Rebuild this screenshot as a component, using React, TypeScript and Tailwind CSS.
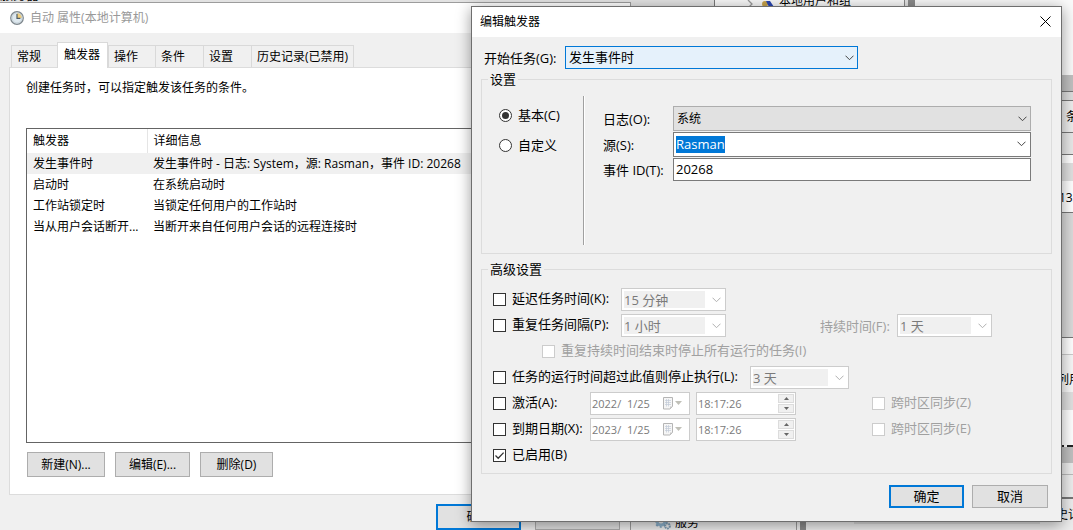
import type { ReactNode } from "react";

const triggers = [
  { name: "发生事件时", detail: "发生事件时 - 日志: System，源: Rasman，事件 ID: 20268" },
  { name: "启动时", detail: "在系统启动时" },
  { name: "工作站锁定时", detail: "当锁定任何用户的工作站时" },
  { name: "当从用户会话断开...", detail: "当断开来自任何用户会话的远程连接时" },
];

const tabs = [
  { label: "常规", width: "w-[46px]" },
  { label: "触发器", width: "w-[51px]", active: true },
  { label: "操作", width: "w-[47px]" },
  { label: "条件", width: "w-12" },
  { label: "设置", width: "w-12" },
  { label: "历史记录(已禁用)", width: "w-[103px]" },
];

function Chevron({ className = "text-[#444]" }: { className?: string }) {
  return (
    <svg aria-hidden="true" viewBox="0 0 9 6" className={`pointer-events-none h-[6px] w-[9px] ${className}`}>
      <path d="M0.5 0.7 4.5 4.7 8.5 0.7" fill="none" stroke="currentColor" strokeWidth="1" />
    </svg>
  );
}

function ClockIcon() {
  return (
    <svg aria-hidden="true" viewBox="0 0 14 14" className="h-[14px] w-[14px]">
      <circle cx="7" cy="7" r="6.3" fill="#dfe9ef" stroke="#7d868c" strokeWidth="1.2" />
      <path d="M7 7V2a5 5 0 0 1 5 5z" fill="#f3cf7a" />
      <circle cx="7" cy="7" r="4.9" fill="none" stroke="#b9c6ce" strokeWidth="0.6" />
      <path d="M7 3v4.3h3.4" fill="none" stroke="#4f5d68" strokeWidth="1.2" />
    </svg>
  );
}

function GearIcon() {
  return (
    <svg aria-hidden="true" viewBox="0 0 16 16" className="h-4 w-4">
      <circle cx="6" cy="7" r="4" fill="none" stroke="#8fb4cf" strokeWidth="3" />
      <circle cx="6" cy="7" r="6" fill="none" stroke="#7ea4c0" strokeWidth="1.6" strokeDasharray="2 2.2" />
      <circle cx="12.5" cy="12" r="2.4" fill="none" stroke="#7d9db5" strokeWidth="2" strokeDasharray="1.6 0.6" />
    </svg>
  );
}

// tick box with its label, shared by every option in the dialog
function Check({
  id,
  children,
  width = "",
  disabled,
  checked,
}: {
  id: string;
  children: ReactNode;
  width?: string;
  disabled?: boolean;
  checked?: boolean;
}) {
  return (
    <div className={`flex shrink-0 items-center gap-[6px] pb-px ${width}`}>
      <span className="relative flex h-[13px] w-[13px]">
        <input
          id={id}
          type="checkbox"
          disabled={disabled}
          defaultChecked={checked}
          className="peer h-[13px] w-[13px] appearance-none border border-[#333] bg-white disabled:border-[#ccc]"
        />
        <svg
          aria-hidden="true"
          viewBox="0 0 13 13"
          className="pointer-events-none absolute inset-0 hidden peer-checked:block"
        >
          <path d="M2.5 6.5 5.2 9.2 10.6 3.6" fill="none" stroke="#333" strokeWidth="1.3" />
        </svg>
      </span>
      <label htmlFor={id} className={`whitespace-nowrap pb-[3px] ${disabled ? "text-[#a0a0a0]" : ""}`}>
        {children}
      </label>
    </div>
  );
}

function DisabledCombo({ label, value, width }: { label: string; value: string; width: string }) {
  return (
    <div className={`flex h-[23px] shrink-0 items-center border border-[#ccc] bg-white p-[2px] ${width}`}>
      <select
        disabled
        aria-label={label}
        className="h-[17px] min-w-0 flex-1 appearance-none bg-[#f0f0f0] leading-4 text-[#7a7a7a] opacity-100"
      >
        <option>{value}</option>
      </select>
      <span className="flex w-[18px] justify-end pr-[2px]">
        <Chevron className="text-[#b0b0b0]" />
      </span>
    </div>
  );
}

function DateBox({ label, value }: { label: string; value: string }) {
  return (
    <div className="flex h-[23px] w-[100px] shrink-0 items-center border border-[#ccc] bg-white pl-px">
      <input
        disabled
        aria-label={label}
        defaultValue={value}
        className="w-[70px] whitespace-pre text-[11px] text-[#7a7a7a]"
      />
      <svg aria-hidden="true" viewBox="0 0 20 13" className="h-[13px] w-5">
        <path d="M1.5 0.5h9v9l-2.500 2.500h-6.500z" fill="#f6f6f6" stroke="#b5b5b5" />
        <path d="M3 3.500h6M3 5.500h6M3 7.500h6M4.500 2v7.500M6.500 2v7.500" stroke="#c3ccd8" strokeWidth="0.7" />
        <path d="M10.500 9.500 8 12V9.500z" fill="#c8c8c8" />
        <path d="M13 4h7l-3.500 4z" fill="#c0c0b8" />
      </svg>
    </div>
  );
}

function TimeBox({ label, value }: { label: string; value: string }) {
  return (
    <div className="ml-[6px] flex h-[23px] w-[100px] shrink-0 items-center justify-between border border-[#ccc] bg-white px-[1px]">
      <input disabled aria-label={label} defaultValue={value} className="w-[60px] text-[11px] text-[#7a7a7a]" />
      <span className="flex flex-col gap-px">
        {["增加", "减少"].map((dir) => (
          <button
            key={dir}
            type="button"
            disabled
            aria-label={dir}
            className="flex h-[9px] w-4 items-center justify-center border border-[#dcdcdc] bg-[#f0f0f0]"
          >
            <svg aria-hidden="true" viewBox="0 0 5 3" className="h-[3px] w-[5px]">
              <path d={dir === "增加" ? "M0 3h5L2.500 0z" : "M0 0h5L2.500 3z"} fill="#666" />
            </svg>
          </button>
        ))}
      </span>
    </div>
  );
}

// what shows of the consoles behind the two open windows
function Backdrop() {
  return (
    <div aria-hidden="true" className="absolute inset-0 flex overflow-hidden bg-[#ededed] text-[12px] leading-4">
      <div className="flex min-w-0 flex-1 flex-col justify-between">
        <div className="flex h-2 items-end overflow-hidden bg-[#e2e2e2]">
          <div className="h-full w-[715px] border-r border-[#777]">
            <div className="flex h-[2px] w-[42px] items-end overflow-hidden">
              <span className="text-[13px]">服务器</span>
            </div>
          </div>
          <div className="flex h-full w-[190px] items-end gap-1 border-r border-[#888] bg-[#f7f7f7] pl-8">
            <svg viewBox="0 0 28 8" className="h-2 w-7">
              <path d="M1 0 5 4 1 8" fill="none" stroke="#999" strokeWidth="1.3" />
              <circle cx="18" cy="4" r="3" fill="#c6a24a" />
              <path d="M19 1h4l4 6h-5z" fill="#2946b0" />
            </svg>
            <span className="leading-[14px]">本地用户和组</span>
          </div>
          <div className="ml-[3px] h-full w-[7px] bg-[#8a8a8a]" />
          <div className="h-full flex-1 bg-[#f7f7f7]" />
        </div>
        <div className="flex h-[9px] overflow-hidden">
          <div className="w-[655px]" />
          <div className="flex h-full w-[142px] items-end gap-1 border-r border-[#999]">
            <GearIcon />
            <span className="leading-[14px]">服务</span>
          </div>
          <div className="ml-[3px] w-[6px] bg-[#8a8a8a]" />
          <div className="ml-12 h-[3px] flex-1 bg-[#d8d8d8]" />
        </div>
      </div>
      <div className="flex w-[33px] flex-col overflow-hidden whitespace-nowrap">
        <div className="h-[75px] bg-[#fafafa]" />
        <div className="h-4 bg-[#c0c0c0]" />
        <div className="h-[10px] border-y border-[#777] bg-[#ddd]" />
        <div className="flex h-8 items-center border-b border-[#777] pl-[26px]">
          <span>条件</span>
        </div>
        <div className="h-[22px] border-b border-[#777] bg-[#e8e8e8]" />
        <div className="h-2 bg-white" />
        <div className="h-[18px] bg-[#e0e0e0]" />
        <div className="h-8 border-b border-[#777] bg-white pt-[9px] pl-[19px]">133</div>
        <div className="h-[124px] bg-[#dadada]" />
        <div className="h-[18px] border-t border-b border-t-[#777] border-b-[#ccc] bg-white" />
        <div className="flex h-[37px] items-center bg-[#f7f7f7] pt-3 pl-[17px]">
          <span>列用</span>
        </div>
        <div className="h-[18px] bg-[#e0e0e0]" />
        <div className="h-[37px] border-b-2 border-dashed border-[#222] bg-white" />
        <div className="h-4 bg-[#c0c0c0]" />
        <div className="h-3 border-b border-[#bbb]" />
        <div className="h-6 border-b-2 border-[#777]" />
        <div className="flex flex-1 items-center pl-[16px]">
          <span>史记录</span>
        </div>
      </div>
    </div>
  );
}

function PropertiesWindow() {
  return (
    <section
      aria-label="自动 属性(本地计算机)"
      className="absolute top-[2px] left-0 w-[631px] border-t border-r border-[#9c9c9c] bg-[#f0f0f0] text-[12px] leading-4"
    >
      <header className="flex h-[30px] items-center gap-[6px] bg-white pl-[10px] text-[#999]">
        <ClockIcon />
        <h1>自动 属性(本地计算机)</h1>
      </header>

      <div className="pt-[9px] pr-[10px] pl-[9px]">
        <div role="tablist" className="flex items-end pl-[2px]">
          {tabs.map((tab) => (
            <button
              key={tab.label}
              type="button"
              role="tab"
              aria-selected={!!tab.active}
              className={`shrink-0 whitespace-nowrap border-t border-l border-[#d9d9d9] text-left last:border-r ${tab.width} ${
                tab.active ? "z-10 -mb-px h-[26px] border-r bg-white pb-[2px] pl-[6px]" : "h-[22px] pl-[5px]"
              }`}
            >
              {tab.label}
            </button>
          ))}
        </div>
        <div className="border border-[#dcdcdc] bg-white px-4 pt-3 pb-[17px]">
          <p>创建任务时，可以指定触发该任务的条件。</p>
          <div className="mt-8 h-[315px] overflow-hidden border border-[#646464]">
            <table className="w-full table-fixed text-left">
              <thead>
                <tr className="h-6">
                  <th className="w-[120px] border-r border-[#e5e5e5] pl-[6px] font-normal">触发器</th>
                  <th className="pl-[6px] font-normal">详细信息</th>
                </tr>
              </thead>
              <tbody>
                {triggers.map((t, i) => (
                  <tr key={t.name} className={`h-[21px] ${i === 0 ? "bg-[#f0f0f0]" : ""}`}>
                    <td className="whitespace-nowrap pl-[6px]">{t.name}</td>
                    <td className="whitespace-nowrap pl-[6px]">{t.detail}</td>
                  </tr>
                ))}
              </tbody>
            </table>
          </div>
          <div className="mt-[9px] flex gap-[10px] pl-px">
            <button type="button" className="h-[25px] w-[78px] border border-[#adadad] bg-[#e1e1e1]">
              新建(N)...
            </button>
            <button type="button" className="h-[25px] w-[75px] border border-[#adadad] bg-[#e1e1e1]">
              编辑(E)...
            </button>
            <button type="button" className="h-[25px] w-[73px] border border-[#adadad] bg-[#e1e1e1]">
              删除(D)
            </button>
          </div>
        </div>
      </div>

      <div className="flex justify-end gap-[14px] pt-[9px] pr-[10px]">
        <button type="button" className="h-[26px] w-[85px] border-2 border-[#0078d7] bg-[#e1e1e1]">
          确定
        </button>
        <button type="button" className="h-[26px] w-[85px] border border-[#adadad] bg-[#e1e1e1]">
          取消
        </button>
      </div>
    </section>
  );
}

function TriggerDialog() {
  return (
    <section
      role="dialog"
      aria-label="编辑触发器"
      className="absolute top-[6px] left-[471px] w-[591px] border border-[#6e6e6e] bg-[#f0f0f0] text-[13px] leading-[18px] shadow-[0_3px_14px_rgba(0,0,0,0.4)]"
    >
      <header className="flex h-[30px] items-center justify-between bg-white pr-[9px] pb-px pl-2 text-[12px]">
        <h2>编辑触发器</h2>
        <button type="button" aria-label="关闭" className="p-px">
          <svg aria-hidden="true" viewBox="0 0 11 11" className="h-[11px] w-[11px]">
            <path d="M0.5 0.5l10 10M10.500 0.5l-10 10" stroke="#000" strokeWidth="1" />
          </svg>
        </button>
      </header>

      <form className="px-[9px] pt-[9px] pb-[13px]" onSubmit={(e) => e.preventDefault()}>
        <div className="flex items-center pl-[3px]">
          <label htmlFor="begin" className="w-[81px] whitespace-nowrap">
            开始任务(G):
          </label>
          <div className="relative flex w-[293px] items-center">
            <select
              id="begin"
              className="h-[23px] w-full appearance-none border border-[#0078d7] bg-[#e5f1fb] pb-[2px] pl-[3px] leading-[18px]"
            >
              <option>发生事件时</option>
            </select>
            <span className="pointer-events-none absolute right-[4px]">
              <Chevron />
            </span>
          </div>
        </div>

        <fieldset className="mt-px border border-[#dcdcdc] pr-5 pb-2 pl-[17px]">
          <legend className="-ml-[11px] px-[2px]">设置</legend>
          <div className="flex pt-2">
            <div className="flex w-[84px] flex-col gap-3 pt-[10px]">
              {["基本(C)", "自定义"].map((label, i) => (
                <label key={label} className="flex items-center gap-[6px]">
                  <span className="relative flex h-[13px] w-[13px] items-center justify-center">
                    <input
                      type="radio"
                      name="mode"
                      defaultChecked={i === 0}
                      className="peer h-[13px] w-[13px] appearance-none rounded-full border border-[#333] bg-white"
                    />
                    <span className="pointer-events-none absolute hidden h-[7px] w-[7px] rounded-full bg-[#333] peer-checked:block" />
                  </span>
                  {label}
                </label>
              ))}
            </div>
            <div className="h-[149px] w-[2px] border-r border-l border-l-[#a0a0a0] border-r-white" />
            <div className="grid flex-1 grid-cols-[70px_1fr] content-start items-center gap-y-px pt-[10px] pl-[18px]">
              <label htmlFor="log">日志(O):</label>
              <div className="relative flex items-center">
                <select
                  id="log"
                  className="h-[25px] w-full appearance-none border border-[#adadad] bg-[#e1e1e1] pl-[3px] text-[12px] leading-4"
                >
                  <option>系统</option>
                </select>
                <span className="pointer-events-none absolute right-[4px]">
                  <Chevron />
                </span>
              </div>
              <label htmlFor="source">源(S):</label>
              <div className="flex h-[25px] items-center justify-between border border-[#7a7a7a] bg-white pr-[4px] pb-px pl-[2px]">
                <input
                  id="source"
                  defaultValue="Rasman"
                  className="field-sizing-content h-[17px] bg-[#0078d7] leading-[17px] text-white outline-none"
                />
                <button type="button" aria-label="展开">
                  <Chevron />
                </button>
              </div>
              <label htmlFor="event" className="whitespace-nowrap">
                事件 ID(T):
              </label>
              <input
                id="event"
                defaultValue="20268"
                className="h-[23px] min-w-0 border border-[#7a7a7a] bg-white pb-px pl-[2px]"
              />
            </div>
          </div>
        </fieldset>

        <fieldset className="mt-[6px] border border-[#dcdcdc] pr-3 pb-[6px] pl-[11px]">
          <legend className="-ml-[5px] px-[2px]">高级设置</legend>
          <div className="flex flex-col gap-[3px] pt-[10px]">
            <div className="flex h-[23px] items-center">
              <Check id="delay" width="w-32">
                延迟任务时间(K):
              </Check>
              <DisabledCombo label="延迟任务时间" value="15 分钟" width="w-[105px]" />
            </div>
            <div className="flex h-[23px] items-center">
              <Check id="repeat" width="w-32">
                重复任务间隔(P):
              </Check>
              <DisabledCombo label="重复任务间隔" value="1 小时" width="w-[105px]" />
              <span className="ml-[94px] w-[77px] whitespace-nowrap text-[#a0a0a0]">持续时间(F):</span>
              <DisabledCombo label="持续时间" value="1 天" width="w-[95px]" />
            </div>
            <div className="flex h-[23px] items-center pl-[49px]">
              <Check id="stop-all" disabled>
                重复持续时间结束时停止所有运行的任务(I)
              </Check>
            </div>
            <div className="flex h-[23px] items-center">
              <Check id="stop-after" width="w-[257px]">
                任务的运行时间超过此值则停止执行(L):
              </Check>
              <DisabledCombo label="停止执行" value="3 天" width="w-[99px]" />
            </div>
            <div className="flex h-[23px] items-center">
              <Check id="activate" width="w-[97px]">
                激活(A):
              </Check>
              <DateBox label="激活日期" value="2022/  1/25" />
              <TimeBox label="激活时间" value="18:17:26" />
              <div className="w-[76px]" />
              <Check id="sync-activate" disabled>
                跨时区同步(Z)
              </Check>
            </div>
            <div className="flex h-[23px] items-center">
              <Check id="expire" width="w-[97px]">
                到期日期(X):
              </Check>
              <DateBox label="到期日期" value="2023/  1/25" />
              <TimeBox label="到期时间" value="18:17:26" />
              <div className="w-[76px]" />
              <Check id="sync-expire" disabled>
                跨时区同步(E)
              </Check>
            </div>
            <div className="flex h-[23px] items-center">
              <Check id="enabled" checked>
                已启用(B)
              </Check>
            </div>
          </div>
        </fieldset>

        <div className="mt-[11px] flex justify-end gap-2 pr-[4px]">
          <button type="submit" className="h-[23px] w-[75px] border-2 border-[#0078d7] bg-[#e1e1e1] leading-[17px]">
            确定
          </button>
          <button type="button" className="h-[23px] w-[76px] border border-[#adadad] bg-[#e1e1e1] leading-[17px]">
            取消
          </button>
        </div>
      </form>
    </section>
  );
}

export default function App() {
  return (
    <main className="relative h-screen w-full overflow-hidden font-['Open_Sans','Noto_Sans_CJK_SC',sans-serif] text-black">
      <Backdrop />
      <PropertiesWindow />
      <TriggerDialog />
    </main>
  );
}
